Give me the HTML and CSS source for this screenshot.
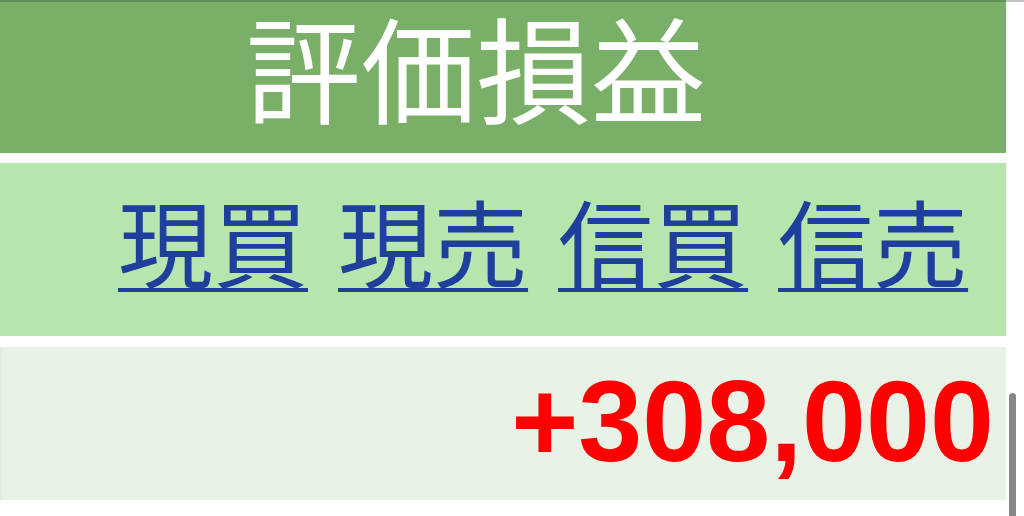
FILE: index.html
```html
<!DOCTYPE html>
<html lang="ja">
<head>
<meta charset="utf-8">
<title>評価損益</title>
<link rel="stylesheet" href="styles.css">
</head>
<body>
<div class="topline"></div>
<div class="page">
  <div class="panel">
    <div class="row row-head"><span class="title">評価損益</span></div>
    <div class="row row-links">
      <a class="lnk" href="#">現買</a>
      <a class="lnk" href="#">現売</a>
      <a class="lnk" href="#">信買</a>
      <a class="lnk" href="#">信売</a>
    </div>
    <div class="row row-value"><span class="value">+308,000</span></div>
  </div>
  <div class="scroll"><div class="thumb"></div></div>
</div>
</body>
</html>
```
FILE: styles.css
```css
html, body {
  margin: 0;
  padding: 0;
  background: #ffffff;
  overflow: hidden;
}
body {
  width: 1024px;
  height: 516px;
  font-family: "Noto Sans CJK JP", "Noto Sans", sans-serif;
}
.topline {
  height: 2px;
  background: linear-gradient(to right, #5f8f52 0, #5f8f52 1006px, #c4c4c4 1006px, #c4c4c4 100%);
}
.page {
  display: flex;
  height: 514px;
}
.panel {
  width: 1006px;
  display: flex;
  flex-direction: column;
}
.row {
  display: flex;
  align-items: center;
  box-sizing: border-box;
}
.row-head {
  height: 151px;
  background: #7aaf68;
  padding-left: 246px;
  padding-top: 6px;
  align-items: flex-start;
}
.title {
  color: #ffffff;
  font-size: 115px;
  line-height: 1;
}
.row-links {
  margin-top: 10px;
  height: 173px;
  background: #b7e5ae;
  padding-left: 118px;
  gap: 30px;
}
.lnk {
  color: #1f3f9c;
  font-size: 95px;
  line-height: 1;
  text-decoration: underline;
  text-decoration-thickness: 4px;
  text-underline-offset: 7px;
  margin-top: -20px;
}
.row-value {
  margin-top: 11px;
  height: 153px;
  background: #e8f2e7;
  justify-content: flex-end;
  padding-right: 12px;
  border-left: 2px solid #e2ede0;
}
.value {
  color: #ff0000;
  font-family: "Liberation Sans", Arial, sans-serif;
  font-weight: bold;
  font-size: 115px;
  line-height: 1;
  margin-top: -4px;
}
.scroll {
  flex: 1;
  position: relative;
}
.thumb {
  position: absolute;
  left: 3px;
  top: 391px;
  width: 7px;
  height: 140px;
  border-radius: 4px;
  background: #868686;
}
```
